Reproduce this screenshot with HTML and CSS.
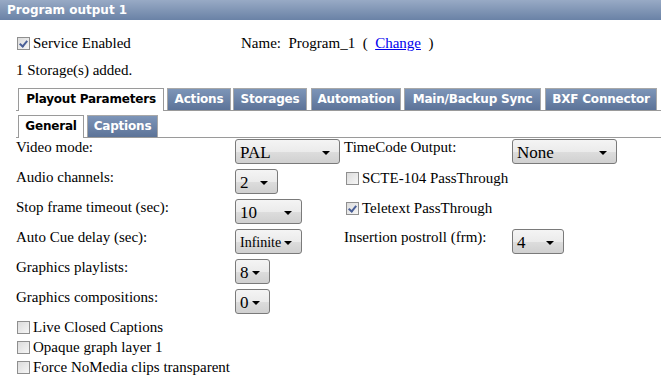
FILE: index.html
```html
<!DOCTYPE html>
<html lang="en">
<head>
  <meta charset="UTF-8">
  <title>Program output 1</title>
  <link rel="stylesheet" href="styles.css">
</head>
<body>
  <div class="header">Program output 1</div>

  <div class="content">
    <div class="top-row">
      <label class="check-label service"><span class="cb checked"></span>Service Enabled</label>
      <span class="name">Name:&nbsp; Program_1&nbsp; (&nbsp; <a href="#">Change</a>&nbsp; )</span>
    </div>
    <div class="storage">1 Storage(s) added.</div>

    <div class="tabs">
      <span class="tab active t1">Playout Parameters</span>
      <span class="tab t2">Actions</span>
      <span class="tab t3">Storages</span>
      <span class="tab t4">Automation</span>
      <span class="tab t5">Main/Backup Sync</span>
      <span class="tab t6">BXF Connector</span>
    </div>
    <div class="tabs sub">
      <span class="tab active s1">General</span>
      <span class="tab s2">Captions</span>
    </div>

    <div class="form">
      <div class="lbl">Video mode:</div>
      <div><span class="sel w105">PAL<i class="arr"></i></span></div>
      <div class="lbl">TimeCode Output:</div>
      <div><span class="sel w105">None<i class="arr"></i></span></div>

      <div class="lbl">Audio channels:</div>
      <div><span class="sel w43">2<i class="arr"></i></span></div>
      <div class="span2"><label class="check-label"><span class="cb"></span>SCTE-104 PassThrough</label></div>

      <div class="lbl">Stop frame timeout (sec):</div>
      <div><span class="sel w67">10<i class="arr"></i></span></div>
      <div class="span2"><label class="check-label"><span class="cb checked"></span>Teletext PassThrough</label></div>

      <div class="lbl">Auto Cue delay (sec):</div>
      <div><span class="sel w67 small">Infinite<i class="arr"></i></span></div>
      <div class="lbl">Insertion postroll (frm):</div>
      <div><span class="sel w52">4<i class="arr"></i></span></div>

      <div class="lbl">Graphics playlists:</div>
      <div><span class="sel w35">8<i class="arr"></i></span></div>
      <div class="span2"></div>

      <div class="lbl">Graphics compositions:</div>
      <div><span class="sel w35">0<i class="arr"></i></span></div>
      <div class="span2"></div>
    </div>

    <div class="checks">
      <label class="check-label"><span class="cb"></span>Live Closed Captions</label>
      <label class="check-label"><span class="cb"></span>Opaque graph layer 1</label>
      <label class="check-label"><span class="cb"></span>Force NoMedia clips transparent</label>
    </div>
  </div>
</body>
</html>
```

FILE: styles.css
```css
body {
  margin: 0;
  background: #fff;
  font-family: "Liberation Serif", "Times New Roman", serif;
  font-size: 15px;
  color: #000;
}
.header {
  height: 20px;
  line-height: 20px;
  padding-left: 7px;
  background: linear-gradient(#98aac5, #6a82a6);
  color: #fff;
  font-family: "DejaVu Sans", Verdana, sans-serif;
  font-weight: bold;
  font-size: 12px;
}
.content {
  padding-left: 16px;
}
.top-row {
  display: flex;
  height: 20px;
  margin-top: 13px;
  align-items: center;
}
.service {
  width: 225px;
}
.name a {
  color: #0000ee;
}
.storage {
  margin-top: 8px;
  height: 18px;
  line-height: 18px;
}
.check-label {
  display: flex;
  align-items: center;
  height: 20px;
}
.cb {
  width: 11px;
  height: 11px;
  border: 1px solid #8f8f8f;
  background: linear-gradient(135deg, #dcdcdc, #f6f6f6);
  margin: 0 3px 0 1px;
  position: relative;
}
.cb.checked::after {
  content: "";
  position: absolute;
  left: 3px;
  top: 1px;
  width: 3px;
  height: 6px;
  border: solid #4a5f97;
  border-width: 0 2px 2px 0;
  transform: rotate(40deg);
}
.tabs {
  display: flex;
  align-items: flex-start;
  gap: 3px;
  height: 22px;
  margin-top: 9px;
  padding-left: 2px;
  border-bottom: 1px solid #9a9a9a;
  font-family: "DejaVu Sans", Verdana, sans-serif;
  font-weight: bold;
  font-size: 12px;
  letter-spacing: -0.2px;
}
.tabs.sub {
  margin-top: 4px;
}
.tab {
  flex: none;
  box-sizing: border-box;
  height: 22px;
  line-height: 21px;
  text-align: center;
  white-space: nowrap;
  border: 1px solid #a8a8a8;
  border-bottom: none;
  background: linear-gradient(#7d95b8, #5c7398);
  color: #fff;
}
.tab.active {
  background: #fff;
  color: #000;
  border-color: #9a9a9a;
  height: 23px;
}
.t1 { width: 146px; }
.t2 { width: 64px; }
.t3 { width: 74px; margin-left: -1px; }
.t4 { width: 90px; margin-left: 1px; }
.t5 { width: 137px; }
.t6 { width: 112px; margin-left: 1px; }
.s1 { width: 66px; }
.s2 { width: 71px; }
.form {
  display: grid;
  grid-template-columns: 219px 109px 168px auto;
  grid-auto-rows: 30px;
  margin-top: 1px;
}
.lbl {
  line-height: 17px;
}
.span2 {
  grid-column: span 2;
  padding-left: 1px;
}
.span2 .check-label {
  height: 19px;
}
.sel {
  display: flex;
  align-items: center;
  box-sizing: border-box;
  height: 25px;
  padding: 2px 0 0 4px;
  border: 1px solid #7a7a7a;
  border-radius: 3px;
  background: linear-gradient(#f4f4f4, #ebebeb 50%, #dddddd 51%, #d0d0d0);
  position: relative;
  font-size: 17px;
}
.sel.small {
  font-size: 14px;
}
.arr {
  position: absolute;
  right: 9px;
  top: 11px;
  border-left: 4px solid transparent;
  border-right: 4px solid transparent;
  border-top: 4px solid #000;
}
.w105 { width: 105px; }
.w43 { width: 43px; }
.w67 { width: 67px; }
.w52 { width: 52px; }
.w35 { width: 35px; }
.checks {
  margin-top: -2px;
}
```
